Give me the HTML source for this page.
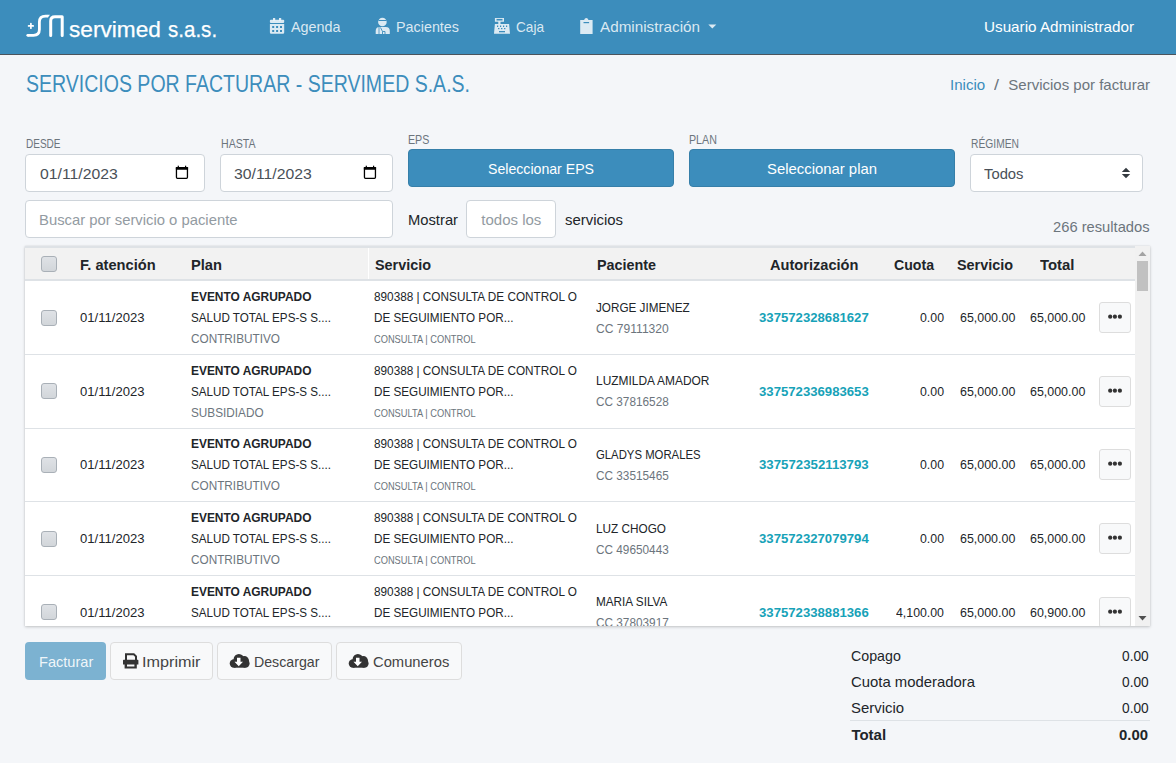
<!DOCTYPE html>
<html><head><meta charset="utf-8"><style>
html,body{margin:0;padding:0;width:1176px;height:763px;overflow:hidden;background:#f4f6f9;position:relative;font-family:"Liberation Sans",sans-serif}
.t{position:absolute;white-space:pre;line-height:1;transform-origin:0 0}
</style></head><body>
<div style="position:absolute;left:0px;top:0px;width:1176px;height:54px;background:#3c8dbc;border-bottom:1px solid #4b545c"></div>
<svg style="position:absolute;left:0;top:0" width="240" height="54" viewBox="0 0 240 54">
<g fill="none" stroke="#fff" stroke-linecap="round" stroke-linejoin="round">
<path d="M28.6 25.9H33.2M30.9 23.6V28.2" stroke-width="1.7"/>
<path d="M27.8 35.3H33.5C37.3 35.3 39.4 33.2 39.4 29.6V22C39.4 18.2 41.6 16.2 45.6 16.2H47.2" stroke-width="2.8" stroke-linecap="butt"/>
<circle cx="27.8" cy="35.3" r="1.4" fill="#fff" stroke="none"/>
<path d="M47 14.8H49.9L48 17.6H47Z" fill="#fff" stroke="none"/>
<path d="M50.7 35.6V21C50.7 18.3 52.3 16.8 55 16.8H62.2V35.6" stroke-width="3"/>
</g></svg>
<div class="t" style="left:69.40px;top:18.50px;font-size:22px;color:#fff;transform:scaleX(1.0286);-webkit-text-stroke:0.25px #fff;">servimed</div>
<div class="t" style="left:168.40px;top:18.50px;font-size:22px;color:#fff;transform:scaleX(0.9338);-webkit-text-stroke:0.25px #fff;">s.a.s.</div>
<svg style="position:absolute;left:0;top:0" width="720" height="54" viewBox="0 0 720 54">
<g fill="rgba(255,255,255,.82)">
<rect x="273" y="18" width="2.2" height="2.5"/><rect x="279" y="18" width="2.2" height="2.5"/>
<rect x="269.9" y="19.8" width="14.3" height="3.2" rx="1"/>
<path d="M269.9 24H284.2V32.6Q284.2 33.8 283 33.8H271.1Q269.9 33.8 269.9 32.6Z M272.2 25.9V27.9H274.2V25.9Z M276.1 25.9V27.9H278.1V25.9Z M280 25.9V27.9H282V25.9Z M272.2 30V32H274.2V30Z M276.1 30V32H278.1V30Z M280 30V32H282V30Z" fill-rule="evenodd"/>
<circle cx="382.4" cy="22" r="4.3"/>
<path d="M375.7 34V31Q375.7 26.9 379.5 26.9H385.9Q389.8 26.9 389.8 31V34Z"/>
<path d="M494.9 17.9H504V21.7H494.9Z M498.3 21.7H500.5V24H498.3Z"/>
<path d="M494.9 24H509.1L510 33.8H494Z"/>
<path d="M580.2 20.1H584.1Q584.8 17.9 586.3 17.9Q587.8 17.9 588.5 20.1H592.6V34H580.2Z"/>
<path d="M708.3 24.5H716.3L712.3 28.5Z"/>
</g>
<g fill="#3c8dbc">
<rect x="496.5" y="18.9" width="6" height="1.6"/>
<rect x="497" y="25.5" width="1.2" height="1.5"/><rect x="500" y="25.5" width="1.2" height="1.5"/><rect x="503" y="25.5" width="1.2" height="1.5"/><rect x="506" y="25.5" width="1.2" height="1.5"/>
<rect x="498" y="28" width="1.4" height="1.2"/><rect x="501" y="28" width="1.4" height="1.2"/><rect x="504" y="28" width="1.4" height="1.2"/>
<rect x="499" y="31" width="6" height="1.3"/>
<rect x="583.5" y="22" width="5.6" height="1.2"/>
<path d="M379 27V34" stroke="#3c8dbc" stroke-width="0.8" fill="none"/>
<path d="M380.5 27.5L382.5 31.5V34M382.5 31.5H385V34" stroke="#3c8dbc" stroke-width="0.9" fill="none"/>
<rect x="378.5" y="20" width="8" height="1" />
</g>
</svg>
<div class="t" style="left:290.50px;top:19.00px;font-size:15px;color:rgba(255,255,255,.82);transform:scaleX(0.9571);">Agenda</div>
<div class="t" style="left:396.20px;top:19.00px;font-size:15px;color:rgba(255,255,255,.82);transform:scaleX(0.9564);">Pacientes</div>
<div class="t" style="left:515.70px;top:19.00px;font-size:15px;color:rgba(255,255,255,.82);transform:scaleX(0.9073);">Caja</div>
<div class="t" style="left:600.00px;top:19.00px;font-size:15px;color:rgba(255,255,255,.82);transform:scaleX(1.0165);">Administración</div>
<div class="t" style="left:984.00px;top:18.70px;font-size:15px;color:#fff;transform:scaleX(1.0165);">Usuario Administrador</div>
<div class="t" style="left:26.00px;top:73.00px;font-size:23px;color:#3c8dbc;transform:scaleX(0.8487);">SERVICIOS POR FACTURAR - SERVIMED S.A.S.</div>
<div class="t" style="left:950.30px;top:76.60px;font-size:15px;color:#3c8dbc;transform:scaleX(1.0048);">Inicio</div>
<div class="t" style="left:994.00px;top:76.60px;font-size:15px;color:#6c757d;transform:scaleX(1.1985);">/</div>
<div class="t" style="left:1008.30px;top:76.60px;font-size:15px;color:#6c757d;">Servicios por facturar</div>
<div class="t" style="left:26.00px;top:138.00px;font-size:12px;color:#6c757d;transform:scaleX(0.8345);">DESDE</div>
<div class="t" style="left:220.60px;top:138.00px;font-size:12px;color:#6c757d;transform:scaleX(0.8843);">HASTA</div>
<div class="t" style="left:408.20px;top:133.80px;font-size:12px;color:#6c757d;transform:scaleX(0.8900);">EPS</div>
<div class="t" style="left:689.00px;top:133.80px;font-size:12px;color:#6c757d;transform:scaleX(0.8900);">PLAN</div>
<div class="t" style="left:970.50px;top:138.00px;font-size:12px;color:#6c757d;transform:scaleX(0.8569);">RÉGIMEN</div>
<div style="position:absolute;left:25px;top:154px;width:180px;height:38px;background:#fff;border:1px solid #ced4da;border-radius:4px;box-sizing:border-box"></div>
<div style="position:absolute;left:220px;top:154px;width:173px;height:38px;background:#fff;border:1px solid #ced4da;border-radius:4px;box-sizing:border-box"></div>
<div style="position:absolute;left:970px;top:154px;width:173px;height:38px;background:#fff;border:1px solid #ced4da;border-radius:4px;box-sizing:border-box"></div>
<div style="position:absolute;left:25px;top:200px;width:368px;height:38px;background:#fff;border:1px solid #ced4da;border-radius:4px;box-sizing:border-box"></div>
<div style="position:absolute;left:466px;top:200px;width:90px;height:38px;background:#fff;border:1px solid #ced4da;border-radius:4px;box-sizing:border-box"></div>
<div class="t" style="left:39.60px;top:165.80px;font-size:15px;color:#495057;transform:scaleX(1.0504);">01/11/2023</div>
<div class="t" style="left:234.20px;top:165.80px;font-size:15px;color:#495057;transform:scaleX(1.0504);">30/11/2023</div>
<svg style="position:absolute;left:175px;top:165px" width="15" height="15" viewBox="0 0 15 15">
<rect x="1.45" y="2.55" width="11" height="10.8" rx="1" fill="none" stroke="#000" stroke-width="1.3"/>
<rect x="0.8" y="1.9" width="12.3" height="2.8" rx="0.6" fill="#000"/>
<rect x="2.7" y="0.7" width="1.2" height="1.6" fill="#000"/><rect x="10" y="0.7" width="1.2" height="1.6" fill="#000"/>
</svg>
<svg style="position:absolute;left:363px;top:165px" width="15" height="15" viewBox="0 0 15 15">
<rect x="1.45" y="2.55" width="11" height="10.8" rx="1" fill="none" stroke="#000" stroke-width="1.3"/>
<rect x="0.8" y="1.9" width="12.3" height="2.8" rx="0.6" fill="#000"/>
<rect x="2.7" y="0.7" width="1.2" height="1.6" fill="#000"/><rect x="10" y="0.7" width="1.2" height="1.6" fill="#000"/>
</svg>
<div style="position:absolute;left:408px;top:149px;width:266px;height:38px;background:#3c8dbc;border:1px solid #367fa9;border-radius:4px;box-sizing:border-box"></div>
<div style="position:absolute;left:689px;top:149px;width:266px;height:38px;background:#3c8dbc;border:1px solid #367fa9;border-radius:4px;box-sizing:border-box"></div>
<div class="t" style="left:488.00px;top:161.00px;font-size:15px;color:#fff;transform:scaleX(0.9417);">Seleccionar EPS</div>
<div class="t" style="left:767.20px;top:161.00px;font-size:15px;color:#fff;transform:scaleX(0.9918);">Seleccionar plan</div>
<div class="t" style="left:983.80px;top:165.70px;font-size:15px;color:#495057;transform:scaleX(0.9867);">Todos</div>
<svg style="position:absolute;left:1120px;top:166px" width="12" height="14" viewBox="0 0 12 14">
<path d="M1.8 6H10.2L6 1.8Z M1.8 8H10.2L6 12.2Z" fill="#343a40"/></svg>
<div class="t" style="left:38.80px;top:212.20px;font-size:15px;color:#939ba2;transform:scaleX(0.9879);">Buscar por servicio o paciente</div>
<div class="t" style="left:408.00px;top:211.80px;font-size:15px;color:#212529;transform:scaleX(0.9834);">Mostrar</div>
<div class="t" style="left:481.30px;top:212.00px;font-size:15px;color:#939ba2;">todos los</div>
<div class="t" style="left:564.60px;top:212.00px;font-size:15px;color:#212529;transform:scaleX(0.9938);">servicios</div>
<div class="t" style="left:1052.80px;top:218.70px;font-size:15px;color:#6c757d;transform:scaleX(0.9816);">266 resultados</div>
<div style="position:absolute;left:25px;top:246px;width:1125px;height:380px;background:#fff;box-shadow:0 0 1px rgba(0,0,0,.125),0 1px 3px rgba(0,0,0,.2)"></div>
<div style="position:absolute;left:25px;top:246px;width:1110px;height:2px;background:#dee2e6"></div>
<div style="position:absolute;left:25px;top:248px;width:1110px;height:31px;background:#f2f2f2"></div>
<div style="position:absolute;left:25px;top:279px;width:1110px;height:2px;background:#dee2e6"></div>
<div style="position:absolute;left:368px;top:248px;width:1px;height:31px;background:#fff"></div>
<div style="position:absolute;left:25px;top:354px;width:1110px;height:1px;background:#dee2e6"></div>
<div style="position:absolute;left:25px;top:428px;width:1110px;height:1px;background:#dee2e6"></div>
<div style="position:absolute;left:25px;top:501px;width:1110px;height:1px;background:#dee2e6"></div>
<div style="position:absolute;left:25px;top:575px;width:1110px;height:1px;background:#dee2e6"></div>
<div style="position:absolute;left:41px;top:256px;width:16px;height:16px;background:linear-gradient(#dfe2e6,#d2d6da);border:1px solid #a9b0b7;border-radius:3px;box-sizing:border-box"></div>
<div class="t" style="left:79.60px;top:258.00px;font-size:14px;font-weight:700;color:#212529;transform:scaleX(1.0448);">F. atención</div>
<div class="t" style="left:190.60px;top:258.00px;font-size:14px;font-weight:700;color:#212529;transform:scaleX(1.0481);">Plan</div>
<div class="t" style="left:374.60px;top:258.00px;font-size:14px;font-weight:700;color:#212529;transform:scaleX(1.0278);">Servicio</div>
<div class="t" style="left:596.90px;top:258.00px;font-size:14px;font-weight:700;color:#212529;transform:scaleX(1.0244);">Paciente</div>
<div class="t" style="left:769.70px;top:258.00px;font-size:14px;font-weight:700;color:#212529;transform:scaleX(1.0427);">Autorización</div>
<div class="t" style="left:894.30px;top:258.00px;font-size:14px;font-weight:700;color:#212529;transform:scaleX(1.0083);">Cuota</div>
<div class="t" style="left:957.40px;top:258.00px;font-size:14px;font-weight:700;color:#212529;transform:scaleX(1.0278);">Servicio</div>
<div class="t" style="left:1039.50px;top:258.00px;font-size:14px;font-weight:700;color:#212529;transform:scaleX(1.0646);">Total</div>
<div style="position:absolute;left:1135px;top:246px;width:15px;height:380px;background:#f1f1f1"></div>
<div style="position:absolute;left:1137px;top:261px;width:11px;height:30px;background:#c1c1c1"></div>
<svg style="position:absolute;left:1135px;top:246px" width="15" height="380" viewBox="0 0 15 380">
<path d="M3.5 10H11.5L7.5 5.5Z" fill="#a3a3a3"/><path d="M3.5 370H11.5L7.5 374.5Z" fill="#505050"/></svg>
<div style="position:absolute;left:25px;top:642px;width:81px;height:38px;background:#7cb2d1;border-radius:4px"></div>
<div class="t" style="left:38.70px;top:654.00px;font-size:15px;color:rgba(255,255,255,.9);transform:scaleX(0.9721);">Facturar</div>
<div style="position:absolute;left:110px;top:642px;width:103px;height:38px;background:#f8f9fa;border:1px solid #ddd;border-radius:4px;box-sizing:border-box"></div>
<div style="position:absolute;left:217px;top:642px;width:115px;height:38px;background:#f8f9fa;border:1px solid #ddd;border-radius:4px;box-sizing:border-box"></div>
<div style="position:absolute;left:336px;top:642px;width:126px;height:38px;background:#f8f9fa;border:1px solid #ddd;border-radius:4px;box-sizing:border-box"></div>
<div class="t" style="left:142.00px;top:654.00px;font-size:15px;color:#444;transform:scaleX(1.0802);">Imprimir</div>
<div class="t" style="left:253.60px;top:654.00px;font-size:15px;color:#444;transform:scaleX(0.9450);">Descargar</div>
<div class="t" style="left:372.50px;top:654.00px;font-size:15px;color:#444;transform:scaleX(0.9839);">Comuneros</div>
<svg style="position:absolute;left:122px;top:652px" width="18" height="18" viewBox="0 0 18 18">
<path d="M3 1.2H12.2L15 4V8H13V4.8L11.4 3.2H5V8H3Z" fill="#333"/>
<path d="M1 8.4Q1 7.7 1.7 7.7H15.7Q16.4 7.7 16.4 8.4V12.6H14.8V16.4H2.6V12.6H1Z M5 12.6V14.4H12.4V12.6Z" fill="#333" fill-rule="evenodd"/>
</svg>
<svg style="position:absolute;left:229px;top:653px" width="22" height="16" viewBox="0 0 22 16">
<g fill="#333"><circle cx="9.9" cy="6.3" r="5.3"/><circle cx="15.3" cy="7.7" r="4.7"/><circle cx="4.9" cy="10.5" r="4.2"/><circle cx="16.4" cy="10.5" r="4.2"/><rect x="4.9" y="7" width="11.5" height="7.7"/></g>
<path d="M8 4.7H11.5V8.8H14L9.75 13.2L5.5 8.8H8Z" fill="#fff"/></svg>
<svg style="position:absolute;left:348px;top:653px" width="22" height="16" viewBox="0 0 22 16">
<g fill="#333"><circle cx="9.9" cy="6.3" r="5.3"/><circle cx="15.3" cy="7.7" r="4.7"/><circle cx="4.9" cy="10.5" r="4.2"/><circle cx="16.4" cy="10.5" r="4.2"/><rect x="4.9" y="7" width="11.5" height="7.7"/></g>
<path d="M8 4.7H11.5V8.8H14L9.75 13.2L5.5 8.8H8Z" fill="#fff"/></svg>
<div class="t" style="left:851.40px;top:648.20px;font-size:15px;color:#212529;transform:scaleX(0.9477);">Copago</div>
<div class="t" style="left:851.40px;top:674.00px;font-size:15px;color:#212529;transform:scaleX(0.9914);">Cuota moderadora</div>
<div class="t" style="left:851.40px;top:700.00px;font-size:15px;color:#212529;transform:scaleX(0.9933);">Servicio</div>
<div class="t" style="left:851.40px;top:727.00px;font-size:15px;font-weight:700;color:#212529;">Total</div>
<div class="t" style="left:1121.60px;top:648.20px;font-size:15px;color:#212529;transform:scaleX(0.9143);">0.00</div>
<div class="t" style="left:1121.60px;top:674.00px;font-size:15px;color:#212529;transform:scaleX(0.9143);">0.00</div>
<div class="t" style="left:1121.60px;top:700.00px;font-size:15px;color:#212529;transform:scaleX(0.9143);">0.00</div>
<div class="t" style="left:1119.30px;top:727.00px;font-size:15px;font-weight:700;color:#212529;transform:scaleX(0.9930);">0.00</div>
<div style="position:absolute;left:850px;top:720px;width:300px;height:1px;background:#dee2e6"></div>
<div style="position:absolute;left:0;top:0;width:1176px;height:763px;clip-path:inset(246px 41px 137px 25px)">
<div style="position:absolute;left:41px;top:310px;width:16px;height:16px;background:linear-gradient(#dfe2e6,#d2d6da);border:1px solid #a9b0b7;border-radius:3px;box-sizing:border-box"></div>
<div class="t" style="left:80.30px;top:311.00px;font-size:13px;color:#212529;transform:scaleX(1.0061);">01/11/2023</div>
<div class="t" style="left:191.20px;top:290.00px;font-size:13px;font-weight:700;color:#212529;transform:scaleX(0.9176);">EVENTO AGRUPADO</div>
<div class="t" style="left:191.20px;top:311.00px;font-size:13px;color:#212529;transform:scaleX(0.8957);">SALUD TOTAL EPS-S S....</div>
<div class="t" style="left:191.20px;top:332.00px;font-size:13px;color:#6c757d;transform:scaleX(0.9060);">CONTRIBUTIVO</div>
<div class="t" style="left:374.00px;top:290.00px;font-size:13px;color:#212529;transform:scaleX(0.9054);">890388 | CONSULTA DE CONTROL O</div>
<div class="t" style="left:374.00px;top:311.00px;font-size:13px;color:#212529;transform:scaleX(0.8990);">DE SEGUIMIENTO POR...</div>
<div class="t" style="left:374.00px;top:334.00px;font-size:11px;color:#6c757d;transform:scaleX(0.8437);">CONSULTA | CONTROL</div>
<div class="t" style="left:596.20px;top:301.00px;font-size:13px;color:#212529;transform:scaleX(0.9008);">JORGE JIMENEZ</div>
<div class="t" style="left:596.20px;top:322.00px;font-size:13px;color:#6c757d;transform:scaleX(0.9296);">CC 79111320</div>
<div class="t" style="left:759.00px;top:311.00px;font-size:13px;font-weight:700;color:#17a2b8;transform:scaleX(1.0115);">337572328681627</div>
<div class="t" style="left:919.70px;top:311.00px;font-size:13px;color:#212529;transform:scaleX(0.9480);">0.00</div>
<div class="t" style="left:960.00px;top:311.00px;font-size:13px;color:#212529;transform:scaleX(0.9560);">65,000.00</div>
<div class="t" style="left:1030.30px;top:311.00px;font-size:13px;color:#212529;transform:scaleX(0.9560);">65,000.00</div>
<div style="position:absolute;left:1099px;top:302px;width:32px;height:31px;background:#f8f9fa;border:1px solid #ddd;border-radius:3px;box-sizing:border-box"></div>
<svg style="position:absolute;left:1100px;top:302px" width="30" height="30" viewBox="0 0 30 30">
<circle cx="10.2" cy="14.7" r="2.1" fill="#333"/><circle cx="14.9" cy="14.7" r="2.1" fill="#333"/><circle cx="19.9" cy="14.7" r="2.1" fill="#333"/></svg>
<div style="position:absolute;left:41px;top:383px;width:16px;height:16px;background:linear-gradient(#dfe2e6,#d2d6da);border:1px solid #a9b0b7;border-radius:3px;box-sizing:border-box"></div>
<div class="t" style="left:80.30px;top:385.00px;font-size:13px;color:#212529;transform:scaleX(1.0061);">01/11/2023</div>
<div class="t" style="left:191.20px;top:364.00px;font-size:13px;font-weight:700;color:#212529;transform:scaleX(0.9176);">EVENTO AGRUPADO</div>
<div class="t" style="left:191.20px;top:385.00px;font-size:13px;color:#212529;transform:scaleX(0.8957);">SALUD TOTAL EPS-S S....</div>
<div class="t" style="left:191.20px;top:406.00px;font-size:13px;color:#6c757d;transform:scaleX(0.9054);">SUBSIDIADO</div>
<div class="t" style="left:374.00px;top:364.00px;font-size:13px;color:#212529;transform:scaleX(0.9054);">890388 | CONSULTA DE CONTROL O</div>
<div class="t" style="left:374.00px;top:385.00px;font-size:13px;color:#212529;transform:scaleX(0.8990);">DE SEGUIMIENTO POR...</div>
<div class="t" style="left:374.00px;top:408.00px;font-size:11px;color:#6c757d;transform:scaleX(0.8437);">CONSULTA | CONTROL</div>
<div class="t" style="left:596.20px;top:374.00px;font-size:13px;color:#212529;transform:scaleX(0.9180);">LUZMILDA AMADOR</div>
<div class="t" style="left:596.20px;top:395.00px;font-size:13px;color:#6c757d;transform:scaleX(0.9073);">CC 37816528</div>
<div class="t" style="left:759.00px;top:385.00px;font-size:13px;font-weight:700;color:#17a2b8;transform:scaleX(1.0115);">337572336983653</div>
<div class="t" style="left:919.70px;top:385.00px;font-size:13px;color:#212529;transform:scaleX(0.9480);">0.00</div>
<div class="t" style="left:960.00px;top:385.00px;font-size:13px;color:#212529;transform:scaleX(0.9560);">65,000.00</div>
<div class="t" style="left:1030.30px;top:385.00px;font-size:13px;color:#212529;transform:scaleX(0.9560);">65,000.00</div>
<div style="position:absolute;left:1099px;top:376px;width:32px;height:31px;background:#f8f9fa;border:1px solid #ddd;border-radius:3px;box-sizing:border-box"></div>
<svg style="position:absolute;left:1100px;top:376px" width="30" height="30" viewBox="0 0 30 30">
<circle cx="10.2" cy="14.7" r="2.1" fill="#333"/><circle cx="14.9" cy="14.7" r="2.1" fill="#333"/><circle cx="19.9" cy="14.7" r="2.1" fill="#333"/></svg>
<div style="position:absolute;left:41px;top:457px;width:16px;height:16px;background:linear-gradient(#dfe2e6,#d2d6da);border:1px solid #a9b0b7;border-radius:3px;box-sizing:border-box"></div>
<div class="t" style="left:80.30px;top:458.00px;font-size:13px;color:#212529;transform:scaleX(1.0061);">01/11/2023</div>
<div class="t" style="left:191.20px;top:437.00px;font-size:13px;font-weight:700;color:#212529;transform:scaleX(0.9176);">EVENTO AGRUPADO</div>
<div class="t" style="left:191.20px;top:458.00px;font-size:13px;color:#212529;transform:scaleX(0.8957);">SALUD TOTAL EPS-S S....</div>
<div class="t" style="left:191.20px;top:479.00px;font-size:13px;color:#6c757d;transform:scaleX(0.9060);">CONTRIBUTIVO</div>
<div class="t" style="left:374.00px;top:437.00px;font-size:13px;color:#212529;transform:scaleX(0.9054);">890388 | CONSULTA DE CONTROL O</div>
<div class="t" style="left:374.00px;top:458.00px;font-size:13px;color:#212529;transform:scaleX(0.8990);">DE SEGUIMIENTO POR...</div>
<div class="t" style="left:374.00px;top:481.00px;font-size:11px;color:#6c757d;transform:scaleX(0.8437);">CONSULTA | CONTROL</div>
<div class="t" style="left:596.20px;top:448.00px;font-size:13px;color:#212529;transform:scaleX(0.8721);">GLADYS MORALES</div>
<div class="t" style="left:596.20px;top:469.00px;font-size:13px;color:#6c757d;transform:scaleX(0.9073);">CC 33515465</div>
<div class="t" style="left:759.00px;top:458.00px;font-size:13px;font-weight:700;color:#17a2b8;transform:scaleX(1.0182);">337572352113793</div>
<div class="t" style="left:919.70px;top:458.00px;font-size:13px;color:#212529;transform:scaleX(0.9480);">0.00</div>
<div class="t" style="left:960.00px;top:458.00px;font-size:13px;color:#212529;transform:scaleX(0.9560);">65,000.00</div>
<div class="t" style="left:1030.30px;top:458.00px;font-size:13px;color:#212529;transform:scaleX(0.9560);">65,000.00</div>
<div style="position:absolute;left:1099px;top:449px;width:32px;height:31px;background:#f8f9fa;border:1px solid #ddd;border-radius:3px;box-sizing:border-box"></div>
<svg style="position:absolute;left:1100px;top:449px" width="30" height="30" viewBox="0 0 30 30">
<circle cx="10.2" cy="14.7" r="2.1" fill="#333"/><circle cx="14.9" cy="14.7" r="2.1" fill="#333"/><circle cx="19.9" cy="14.7" r="2.1" fill="#333"/></svg>
<div style="position:absolute;left:41px;top:531px;width:16px;height:16px;background:linear-gradient(#dfe2e6,#d2d6da);border:1px solid #a9b0b7;border-radius:3px;box-sizing:border-box"></div>
<div class="t" style="left:80.30px;top:532.00px;font-size:13px;color:#212529;transform:scaleX(1.0061);">01/11/2023</div>
<div class="t" style="left:191.20px;top:511.00px;font-size:13px;font-weight:700;color:#212529;transform:scaleX(0.9176);">EVENTO AGRUPADO</div>
<div class="t" style="left:191.20px;top:532.00px;font-size:13px;color:#212529;transform:scaleX(0.8957);">SALUD TOTAL EPS-S S....</div>
<div class="t" style="left:191.20px;top:553.00px;font-size:13px;color:#6c757d;transform:scaleX(0.9060);">CONTRIBUTIVO</div>
<div class="t" style="left:374.00px;top:511.00px;font-size:13px;color:#212529;transform:scaleX(0.9054);">890388 | CONSULTA DE CONTROL O</div>
<div class="t" style="left:374.00px;top:532.00px;font-size:13px;color:#212529;transform:scaleX(0.8990);">DE SEGUIMIENTO POR...</div>
<div class="t" style="left:374.00px;top:555.00px;font-size:11px;color:#6c757d;transform:scaleX(0.8437);">CONSULTA | CONTROL</div>
<div class="t" style="left:596.20px;top:522.00px;font-size:13px;color:#212529;transform:scaleX(0.9056);">LUZ CHOGO</div>
<div class="t" style="left:596.20px;top:543.00px;font-size:13px;color:#6c757d;transform:scaleX(0.9073);">CC 49650443</div>
<div class="t" style="left:759.00px;top:532.00px;font-size:13px;font-weight:700;color:#17a2b8;transform:scaleX(1.0115);">337572327079794</div>
<div class="t" style="left:919.70px;top:532.00px;font-size:13px;color:#212529;transform:scaleX(0.9480);">0.00</div>
<div class="t" style="left:960.00px;top:532.00px;font-size:13px;color:#212529;transform:scaleX(0.9560);">65,000.00</div>
<div class="t" style="left:1030.30px;top:532.00px;font-size:13px;color:#212529;transform:scaleX(0.9560);">65,000.00</div>
<div style="position:absolute;left:1099px;top:523px;width:32px;height:31px;background:#f8f9fa;border:1px solid #ddd;border-radius:3px;box-sizing:border-box"></div>
<svg style="position:absolute;left:1100px;top:523px" width="30" height="30" viewBox="0 0 30 30">
<circle cx="10.2" cy="14.7" r="2.1" fill="#333"/><circle cx="14.9" cy="14.7" r="2.1" fill="#333"/><circle cx="19.9" cy="14.7" r="2.1" fill="#333"/></svg>
<div style="position:absolute;left:41px;top:604px;width:16px;height:16px;background:linear-gradient(#dfe2e6,#d2d6da);border:1px solid #a9b0b7;border-radius:3px;box-sizing:border-box"></div>
<div class="t" style="left:80.30px;top:606.00px;font-size:13px;color:#212529;transform:scaleX(1.0061);">01/11/2023</div>
<div class="t" style="left:191.20px;top:585.00px;font-size:13px;font-weight:700;color:#212529;transform:scaleX(0.9176);">EVENTO AGRUPADO</div>
<div class="t" style="left:191.20px;top:606.00px;font-size:13px;color:#212529;transform:scaleX(0.8957);">SALUD TOTAL EPS-S S....</div>
<div class="t" style="left:191.20px;top:627.00px;font-size:13px;color:#6c757d;transform:scaleX(0.9060);">CONTRIBUTIVO</div>
<div class="t" style="left:374.00px;top:585.00px;font-size:13px;color:#212529;transform:scaleX(0.9054);">890388 | CONSULTA DE CONTROL O</div>
<div class="t" style="left:374.00px;top:606.00px;font-size:13px;color:#212529;transform:scaleX(0.8990);">DE SEGUIMIENTO POR...</div>
<div class="t" style="left:374.00px;top:629.00px;font-size:11px;color:#6c757d;transform:scaleX(0.8437);">CONSULTA | CONTROL</div>
<div class="t" style="left:596.20px;top:595.00px;font-size:13px;color:#212529;transform:scaleX(0.9038);">MARIA SILVA</div>
<div class="t" style="left:596.20px;top:616.00px;font-size:13px;color:#6c757d;transform:scaleX(0.9073);">CC 37803917</div>
<div class="t" style="left:759.00px;top:606.00px;font-size:13px;font-weight:700;color:#17a2b8;transform:scaleX(1.0115);">337572338881366</div>
<div class="t" style="left:895.72px;top:606.00px;font-size:13px;color:#212529;transform:scaleX(0.9480);">4,100.00</div>
<div class="t" style="left:960.00px;top:606.00px;font-size:13px;color:#212529;transform:scaleX(0.9560);">65,000.00</div>
<div class="t" style="left:1030.30px;top:606.00px;font-size:13px;color:#212529;transform:scaleX(0.9560);">60,900.00</div>
<div style="position:absolute;left:1099px;top:597px;width:32px;height:31px;background:#f8f9fa;border:1px solid #ddd;border-radius:3px;box-sizing:border-box"></div>
<svg style="position:absolute;left:1100px;top:597px" width="30" height="30" viewBox="0 0 30 30">
<circle cx="10.2" cy="14.7" r="2.1" fill="#333"/><circle cx="14.9" cy="14.7" r="2.1" fill="#333"/><circle cx="19.9" cy="14.7" r="2.1" fill="#333"/></svg>
</div>
</body></html>
